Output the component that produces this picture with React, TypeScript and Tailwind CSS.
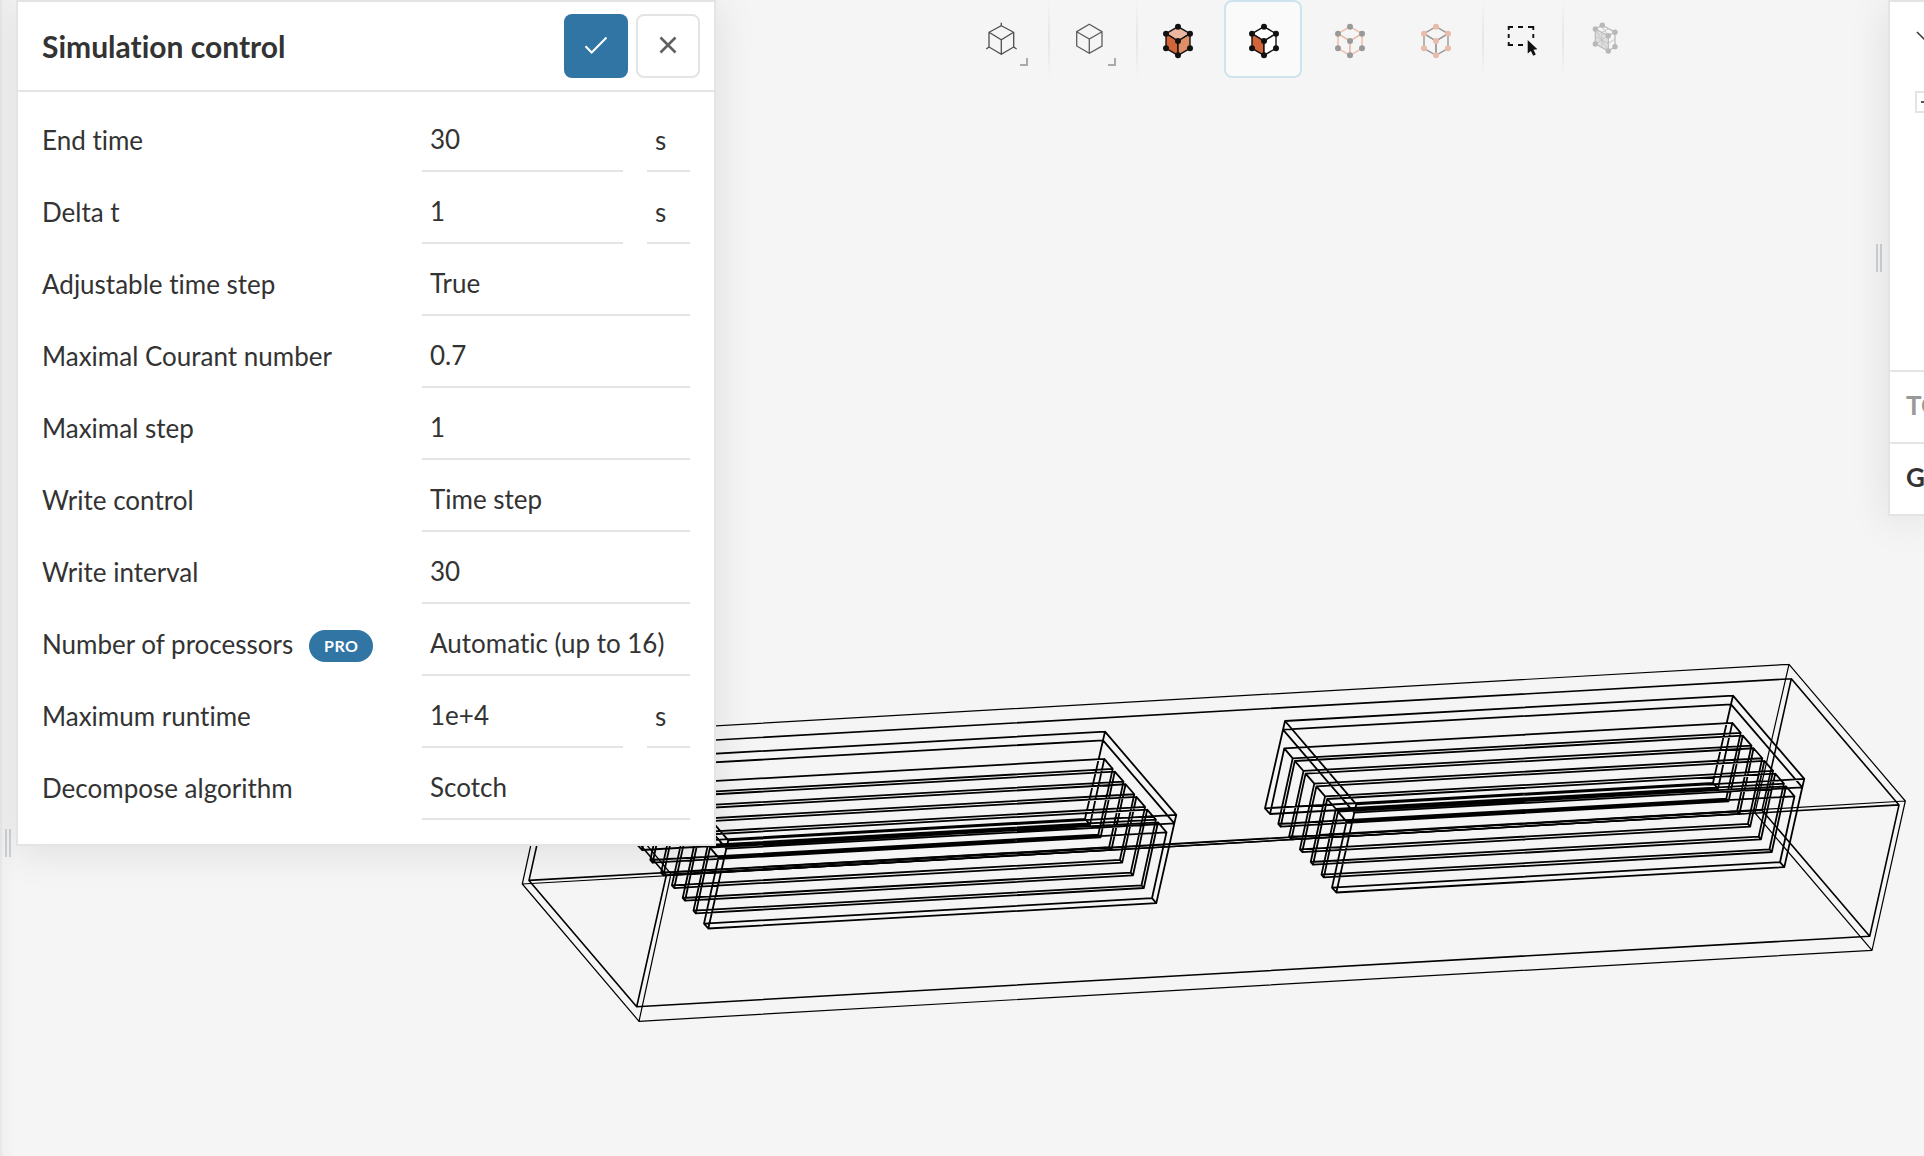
import { useId } from "react";
import type { ReactNode } from "react";

type Pt = [number, number];

const poly = (pts: Pt[]) => "M" + pts.map((p) => p.join(" ")).join("L") + "Z";
const seg = (a: Pt, b: Pt) => `M${a.join(" ")}L${b.join(" ")}`;
const add = (a: Pt, b: Pt): Pt => [a[0] + b[0], a[1] + b[1]];

// A box is drawn from its two end faces plus the edges that join them.
function boxPath(left: Pt[], right: Pt[]) {
  return poly(left) + poly(right) + left.map((p, i) => seg(p, right[i])).join("");
}

const outerBox = boxPath(
  [[555, 735], [671, 874], [639, 1021.3], [522.3, 884]],
  [[1789, 664.3], [1905.3, 801], [1872, 950.3], [1755, 813]],
);
const innerBox = boxPath(
  [[558.3, 749], [666.3, 875.3], [636.7, 1006.7], [529, 880.4]],
  [[1791.3, 678.7], [1899, 804.9], [1869.7, 936.3], [1762, 810.3]],
);

const plate: Pt[] = [[0, 0], [71.3, 83.3], [69.3, 91.7], [-2, 8.7]];

function finProfile(): Pt[] {
  const pts: Pt[] = [[-2, 8.7], [-20, 87.3], [-15, 93], [-0.7, 27.3]];
  for (let k = 0; k < 5; k++) {
    const x = 7.7 + k * 10.8;
    const y = 37.3 + k * 12.67;
    pts.push([x, y], [x - 14.4, y + 65.7], [x - 12.1, y + 68.4], [x + 2.1, y + 2.7]);
  }
  pts.push([61.5, 100.7], [47, 166.6], [51.3, 171.5], [69.3, 91.7]);
  return pts;
}

function sinkPath(origin: Pt) {
  const ext: Pt = [448, -25.4];
  return [plate, finProfile()]
    .map((shape) => {
      const near = shape.map((p) => add(p, origin));
      return boxPath(near, near.map((p) => add(p, ext)));
    })
    .join("");
}

function Wireframe() {
  return (
    <svg
      aria-label="Model wireframe"
      className="absolute inset-0 h-full w-full"
      viewBox="0 0 1924 1156"
      preserveAspectRatio="xMinYMin slice"
      fill="none"
      stroke="#000"
      strokeLinejoin="round"
    >
      <path d={outerBox} strokeWidth="1.2" />
      <path d={innerBox} strokeWidth="1.6" />
      <path d={sinkPath([657, 757])} strokeWidth="1.8" />
      <path d={sinkPath([1285, 721])} strokeWidth="1.8" />
    </svg>
  );
}

function Icon({ children }: { children: ReactNode }) {
  return (
    <svg className="size-full" viewBox="0 0 78 78" fill="none" aria-hidden="true">
      {children}
    </svg>
  );
}

function NodeCube(p: { line: string; dot: string; top?: string; left?: string; right?: string }) {
  const dots: Pt[] = [[40, 26.7], [28, 33.7], [52, 33.7], [40, 41], [28, 48.3], [52, 48.3], [40, 55.3]];
  return (
    <Icon>
      <g stroke={p.line} strokeWidth="1.4" strokeLinejoin="round">
        <path d="M40 26.7L52 33.7L40 41L28 33.7Z" fill={p.top ?? "none"} />
        <path d="M28 33.7L40 41V55.3L28 48.3Z" fill={p.left ?? "none"} />
        <path d="M52 33.7L40 41V55.3L52 48.3Z" fill={p.right ?? "none"} />
      </g>
      {dots.map(([x, y]) => (
        <circle key={`${x}-${y}`} cx={x} cy={y} r="3" fill={p.dot} />
      ))}
    </Icon>
  );
}

const Corner = () => <path d="M58 65H65V58" stroke="#aaa" strokeWidth="2" />;

function AxesCube() {
  return (
    <Icon>
      <path
        d="M39.3 25.7L51.7 32.3V47L39.3 54.3L27 47V32.3ZM27 32.3L39.3 39.7L51.7 32.3M39.3 39.7V54.3M39.3 25.7V22.7M27 47L24.3 49M51.7 47L54.6 49"
        stroke="#4d4d4d"
        strokeWidth="1.3"
      />
      <Corner />
    </Icon>
  );
}

function PlainCube() {
  return (
    <Icon>
      <path
        d="M39.3 24.3L52 31.7V46L39.3 53.3L26.7 46V31.7ZM26.7 31.7L39.3 39L52 31.7M39.3 39V53.3"
        stroke="#5c5c5c"
        strokeWidth="1.3"
      />
      <Corner />
    </Icon>
  );
}

function BoxSelect() {
  return (
    <Icon>
      <path
        d="M24.7 30V27H29M34 27H39M44 27H49.3V30M49.3 34V38M24.7 34V38M24.7 42V45H29M34 45H39"
        stroke="#111"
        strokeWidth="1.9"
      />
      <path d="M43.7 40V53.6L46.9 50.9L49.2 55.8L51.8 54.6L49.5 49.8L53.4 49.2Z" fill="#111" />
    </Icon>
  );
}

function MeshCube() {
  const dots: Pt[] = [[38.3, 25.2], [31.3, 29], [51, 32.2], [44.3, 35.7], [31.3, 44], [51, 46.7], [44.3, 51]];
  return (
    <Icon>
      <path d="M31.3 29L44.3 35.7V51L31.3 44Z" fill="#e0e0e0" />
      <path
        d="M38.3 25.2L51 32.2V46.7L44.3 51L31.3 44V29ZM31.3 29L44.3 35.7L51 32.2M44.3 35.7V51"
        stroke="#b8b8b8"
        strokeWidth="1.2"
      />
      <path
        d="M37.8 32.3V47.5M31.3 36.5L44.3 43.5M31.3 44L44.3 35.7M31.3 29L44.3 51M38.3 27L44.3 35.7M45 43L51 39M37.8 32.3L44 29"
        stroke="#c2c2c2"
        strokeWidth="0.9"
      />
      {dots.map(([x, y]) => (
        <circle key={`${x}-${y}`} cx={x} cy={y} r="2.7" fill="#b8b8b8" />
      ))}
    </Icon>
  );
}

function ToolButton({ label, active, children }: { label: string; active?: boolean; children: ReactNode }) {
  return (
    <button
      type="button"
      aria-label={label}
      aria-pressed={active}
      className={
        active
          ? "size-[78px] rounded-lg bg-[#fafafa] ring-2 ring-[#cde3ee] ring-inset"
          : "size-[78px] rounded-lg"
      }
    >
      {children}
    </button>
  );
}

const Divider = () => (
  <div className="h-[78px] w-0.5 bg-linear-to-b from-transparent via-[#e6e6e6] to-transparent" />
);

function Toolbar() {
  return (
    <div role="toolbar" aria-label="View tools" className="flex">
      <ToolButton label="View orientation"><AxesCube /></ToolButton>
      <div className="w-2" />
      <Divider />
      <ToolButton label="Projection"><PlainCube /></ToolButton>
      <div className="w-2" />
      <Divider />
      <div className="flex gap-2 pr-2">
        <ToolButton label="Select volumes">
          <NodeCube line="#111" dot="#111" top="#ecb7a0" left="#d16537" right="#e08e66" />
        </ToolButton>
        <ToolButton label="Select faces" active>
          <NodeCube line="#111" dot="#111" top="#fff" left="#d16537" right="#fff" />
        </ToolButton>
        <ToolButton label="Select edges"><NodeCube line="#ecbda9" dot="#999" /></ToolButton>
        <ToolButton label="Select vertices"><NodeCube line="#999" dot="#e9bbaa" /></ToolButton>
      </div>
      <Divider />
      <ToolButton label="Box selection"><BoxSelect /></ToolButton>
      <Divider />
      <ToolButton label="Mesh"><MeshCube /></ToolButton>
    </div>
  );
}

function Grip() {
  return (
    <div className="flex h-7 gap-0.5">
      <div className="w-0.5 bg-[#ccd1d6]" />
      <div className="w-0.5 bg-[#ccd1d6]" />
    </div>
  );
}

const underline = "h-16 min-w-0 appearance-none border-b-2 border-[#e4e4e4] bg-transparent outline-none";

interface Field {
  label: string;
  value: string;
  unit?: string;
  choice?: boolean;
  pro?: boolean;
}

const fields: Field[] = [
  { label: "End time", value: "30", unit: "s" },
  { label: "Delta t", value: "1", unit: "s" },
  { label: "Adjustable time step", value: "True", choice: true },
  { label: "Maximal Courant number", value: "0.7" },
  { label: "Maximal step", value: "1" },
  { label: "Write control", value: "Time step", choice: true },
  { label: "Write interval", value: "30" },
  { label: "Number of processors", value: "Automatic (up to 16)", choice: true, pro: true },
  { label: "Maximum runtime", value: "1e+4", unit: "s" },
  { label: "Decompose algorithm", value: "Scotch", choice: true },
];

function FieldRow({ field }: { field: Field }) {
  const id = useId();
  return (
    <div className="flex h-[72px] items-end">
      <div className="flex h-16 w-[380px] shrink-0 items-center">
        <label htmlFor={id}>{field.label}</label>
        {field.pro && (
          <span className="mt-1 ml-4 flex h-8 w-16 items-center justify-center rounded-full bg-[#3175a5] text-base font-bold tracking-wide text-white">
            PRO
          </span>
        )}
      </div>
      <div className="flex min-w-0 flex-1 gap-6">
        {field.choice ? (
          <select id={id} defaultValue={field.value} className={`${underline} flex-1 pl-2`}>
            <option>{field.value}</option>
          </select>
        ) : (
          <input id={id} defaultValue={field.value} className={`${underline} flex-1 pl-2`} />
        )}
        {field.unit && (
          <select
            aria-label={`${field.label} unit`}
            defaultValue={field.unit}
            className={`${underline} w-[43px] shrink-0 pt-0.5 pl-2`}
          >
            <option>{field.unit}</option>
          </select>
        )}
      </div>
    </div>
  );
}

function ControlPanel() {
  return (
    <section className="w-[700px] shrink-0 self-start border-2 border-[#e4e4e4] bg-white shadow-[0_4px_40px_rgba(0,0,0,0.1)]">
      <header className="flex h-[90px] items-center gap-2 border-b-2 border-[#e4e4e4] pr-3.5 pl-6">
        <h1 className="flex-1 text-[30px] font-bold">Simulation control</h1>
        <button
          type="button"
          aria-label="Apply"
          className="flex size-16 items-center justify-center rounded-lg bg-[#3175a5]"
        >
          <svg className="size-8" viewBox="0 0 32 32" fill="none" stroke="#fff" strokeWidth="2" aria-hidden="true">
            <path d="M5.5 16.3L11.7 22.5L26.5 7.5" />
          </svg>
        </button>
        <button
          type="button"
          aria-label="Close"
          className="flex size-16 items-center justify-center rounded-lg border-2 border-[#e4e4e4] bg-white"
        >
          <svg className="size-8" viewBox="0 0 32 32" fill="none" stroke="#606060" strokeWidth="2.6" aria-hidden="true">
            <path d="M8.5 7.5L23.5 22.5M23.5 7.5L8.5 22.5" />
          </svg>
        </button>
      </header>
      <form className="pt-2 pr-6 pb-6 pl-6">
        {fields.map((f) => (
          <FieldRow key={f.label} field={f} />
        ))}
      </form>
    </section>
  );
}

function TreePanel() {
  return (
    <section className="w-9 shrink-0 self-start overflow-hidden border-2 border-r-0 border-[#e4e4e4] bg-white font-bold shadow-[0_4px_40px_rgba(0,0,0,0.1)]">
      <div className="h-[368px] pt-7 pl-[26px]">
        <button type="button" aria-label="Collapse" className="flex h-[61px] items-start">
          <svg className="w-6 shrink-0" viewBox="0 0 24 24" fill="none" stroke="#333" strokeWidth="1.5" aria-hidden="true">
            <path d="M1 2L12 13L23 2" />
          </svg>
        </button>
        <button
          type="button"
          aria-label="Toggle branch"
          className="-ml-px block size-[22px] border-2 border-[#e4e4e4]"
        >
          <svg viewBox="0 0 18 18" stroke="#555" strokeWidth="2" aria-hidden="true">
            <path d="M4 9H14" />
          </svg>
        </button>
      </div>
      <div className="flex h-[72px] items-center border-t-2 border-[#e4e4e4] pb-1 pl-4 text-[#999]">TO</div>
      <div className="flex h-[72px] items-center border-t-2 border-[#e4e4e4] pb-1 pl-4">G</div>
    </section>
  );
}

export default function App() {
  return (
    <div className="relative flex h-screen overflow-hidden bg-[#f5f5f5] font-[Lato,sans-serif] text-[26px] leading-8 text-[#333] [font-variant-ligatures:no-common-ligatures]">
      <Wireframe />
      <div className="relative flex w-full">
        <div className="w-4 shrink-0 border-l-2 border-[#e8e8e8] bg-linear-to-r from-[#f0f0f0] to-transparent pt-[829px] pl-[3px]">
          <Grip />
        </div>
        <ControlPanel />
        <main className="flex flex-1 justify-center pl-3">
          <Toolbar />
        </main>
        <div className="w-3 shrink-0 pt-[244px]">
          <Grip />
        </div>
        <TreePanel />
      </div>
    </div>
  );
}
